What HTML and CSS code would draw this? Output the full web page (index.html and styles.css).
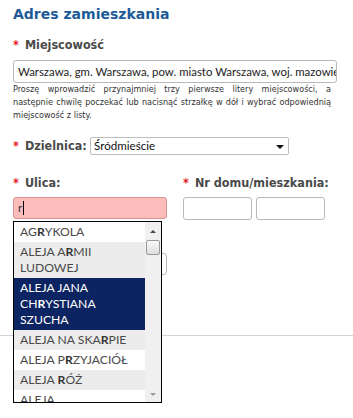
FILE: index.html
```html
<!DOCTYPE html>
<html lang="pl">
<head>
<meta charset="utf-8">
<link rel="stylesheet" href="styles.css">
</head>
<body>
<div class="page">
  <h2 class="title">Adres zamieszkania</h2>

  <div class="field">
    <div class="label"><span class="req">*</span>Miejscowość</div>
    <div class="input wide">Warszawa, gm. Warszawa, pow. miasto Warszawa, woj. mazowieckie</div>
    <p class="help"><span class="hl">Proszę wprowadzić przynajmniej trzy pierwsze litery miejscowości, a</span><span class="hl">następnie chwilę poczekać lub nacisnąć strzałkę w dół i wybrać odpowiednią</span><span class="hl last">miejscowość z listy.</span></p>
  </div>

  <div class="row-inline">
    <div class="label"><span class="req">*</span>Dzielnica:</div>
    <div class="select">Śródmieście<span class="caret"></span></div>
  </div>

  <div class="cols">
    <div class="col street">
      <div class="label"><span class="req">*</span>Ulica:</div>
      <div class="input error">r<span class="cursor"></span></div>
      <div class="input postal"></div>
      <div class="suggest">
        <ul class="items">
          <li class="it">AG<b>R</b>YKOLA</li>
          <li class="it alt">ALEJA A<b>R</b>MII<br>LUDOWEJ</li>
          <li class="it sel">ALEJA JANA<br>CH<b>R</b>YSTIANA<br>SZUCHA</li>
          <li class="it alt">ALEJA NA SKA<b>R</b>PIE</li>
          <li class="it">ALEJA P<b>R</b>ZYJACIÓŁ</li>
          <li class="it alt">ALEJA <b>R</b>ÓŻ</li>
          <li class="it">ALEJA</li>
        </ul>
        <div class="sbar">
          <span class="arr up"></span>
          <span class="thumb"></span>
          <span class="arr down"></span>
        </div>
      </div>
    </div>
    <div class="col">
      <div class="label"><span class="req">*</span>Nr domu/mieszkania:</div>
      <div class="pair">
        <div class="input small"></div>
        <div class="input small"></div>
      </div>
    </div>
  </div>
  <hr class="sep">
</div>
</body>
</html>
```

FILE: styles.css
```css
* { box-sizing: border-box; }
html, body { overflow: hidden; }
body {
  margin: 0;
  background: #fff;
  font-family: "DejaVu Sans", Verdana, sans-serif;
  color: #333;
}
.page {
  padding: 4px 14px 0 13px;
  width: 353px;
  min-height: 418px;
}
.title {
  margin: 0;
  font-size: 14px;
  line-height: 20px;
  color: #1d5a98;
  font-weight: bold;
}
.label {
  font-family: "DejaVu Sans Condensed", "DejaVu Sans", sans-serif;
  font-weight: bold;
  font-size: 12.5px;
  line-height: 16px;
  color: #4a4a4a;
  white-space: nowrap;
}
.req {
  color: #e41b1b;
  margin-right: 6px;
}
.field { margin-top: 13px; }
.field .label { margin-bottom: 7px; }
.input {
  height: 22px;
  border: 1px solid #b9b9b9;
  border-radius: 3px;
  background: #fff;
  font-family: Lato, "Open Sans", sans-serif;
  font-size: 11.4px;
  line-height: 20px;
  padding: 0 4px;
  color: #222;
  white-space: nowrap;
  overflow: hidden;
}
.wide { width: 324px; height: 23px; line-height: 21px; }
.help {
  margin: 0;
  width: 318px;
  font-family: "DejaVu Sans Condensed", "DejaVu Sans", sans-serif;
  font-size: 9px;
  line-height: 13px;
  color: #333;
}
.hl {
  display: block;
  text-align: justify;
  text-align-last: justify;
  white-space: nowrap;
}
.hl.last { text-align-last: left; }
.row-inline {
  display: flex;
  align-items: center;
  gap: 8px;
  margin-top: 15px;
}
.row-inline .label { width: 69px; }
.select {
  width: 199px;
  height: 18px;
  border: 1px solid #bdbdbd;
  border-radius: 2px;
  font-family: Lato, "Open Sans", sans-serif;
  font-size: 11.6px;
  line-height: 16px;
  padding: 0 3px;
  color: #111;
  position: relative;
}
.caret {
  position: absolute;
  right: 4px;
  top: 7px;
  border-left: 4px solid transparent;
  border-right: 4px solid transparent;
  border-top: 4px solid #111;
}
.cols {
  display: flex;
  gap: 16px;
  margin-top: 20px;
}
.col .label { margin-bottom: 6px; }
.street { width: 154px; position: relative; }
.error {
  background: #fbbcbc;
  border-color: #d99393;
  color: #333;
}
.cursor {
  display: inline-block;
  width: 1px;
  height: 14px;
  background: #000;
  vertical-align: -3px;
  margin-left: 1px;
}
.postal { margin-top: 34px; width: 154px; }
.pair { display: flex; gap: 4px; }
.small { width: 69px; height: 23px; }
.sep {
  border: 0;
  border-top: 1px solid #d4d4d4;
  margin: 60px -14px 0 -13px;
}
.suggest {
  position: absolute;
  left: 0;
  top: 46px;
  width: 149px;
  height: 182px;
  border: 1px solid #000;
  background: #fff;
  display: flex;
  overflow: hidden;
  z-index: 2;
}
.items {
  list-style: none;
  margin: 0;
  padding: 0;
  flex: 1;
  min-width: 0;
}
.it {
  font-family: Lato, "Open Sans", sans-serif;
  font-size: 12.2px;
  line-height: 16px;
  padding: 2px 6px;
  color: #4a4a4a;
  background: #fff;
  white-space: nowrap;
}
.it b { font-weight: bold; color: #333; }
.alt { background: #ececec; }
.sel { background: #0c2461; color: #fff; }
.sel b { color: #fff; }
.sbar {
  width: 16px;
  flex: none;
  background: #f0f0f0;
  position: relative;
}
.arr {
  position: absolute;
  left: 5px;
  border-left: 3px solid transparent;
  border-right: 3px solid transparent;
}
.up { top: 8px; border-bottom: 3px solid #444; }
.down { bottom: 6px; border-top: 3px solid #999; }
.thumb {
  position: absolute;
  left: 1px;
  top: 18px;
  width: 14px;
  height: 15px;
  border: 1px solid #9a9a9a;
  border-radius: 2px;
  background: linear-gradient(#fafafa, #dcdcdc);
}
```
